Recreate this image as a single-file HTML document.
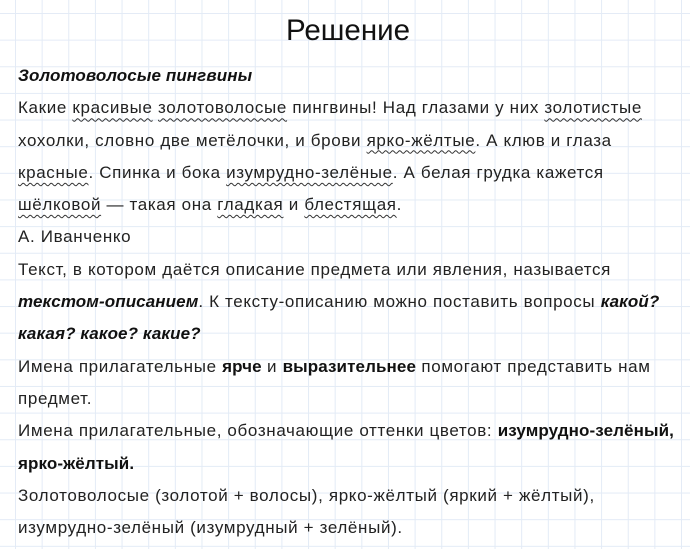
<!DOCTYPE html>
<html><head><meta charset="utf-8"><style>
html,body{margin:0;padding:0}
body{width:690px;height:549px;overflow:hidden;background-color:#fff;
background-image:linear-gradient(to right,#e3ebf6 1px,transparent 1px),linear-gradient(to bottom,#e3ebf6 1px,transparent 1px);
background-size:26.65px 26.65px;background-position:15px 13px;
font-family:"Liberation Sans",sans-serif;color:#222;position:relative}
h1{position:absolute;left:0;width:690px;top:11px;margin:0;text-align:center;font-weight:normal;font-size:29.5px;color:#111;line-height:40px;padding-left:6px;box-sizing:border-box}
.t{position:absolute;left:18px;top:60px;font-size:17px;line-height:32.3px;letter-spacing:0.65px}
.t div{white-space:nowrap}
u{text-decoration:underline wavy #333;text-decoration-thickness:1px;text-underline-offset:4px}
b{color:#111;letter-spacing:0.1px}
</style></head><body>
<h1>Решение</h1>
<div class="t">
<div><b><i>Золотоволосые пингвины</i></b></div>
<div>Какие <u>красивые</u> <u>золотоволосые</u> пингвины! Над глазами у них <u>золотистые</u></div>
<div>хохолки, словно две метёлочки, и брови <u>ярко-жёлтые</u>. А клюв и глаза</div>
<div><u>красные</u>. Спинка и бока <u>изумрудно-зелёные</u>. А белая грудка кажется</div>
<div><u>шёлковой</u> — такая она <u>гладкая</u> и <u>блестящая</u>.</div>
<div>А. Иванченко</div>
<div>Текст, в котором даётся описание предмета или явления, называется</div>
<div><b><i>текстом-описанием</i></b>. К тексту-описанию можно поставить вопросы <b><i>какой?</i></b></div>
<div><b><i>какая? какое? какие?</i></b></div>
<div>Имена прилагательные <b>ярче</b> и <b>выразительнее</b> помогают представить нам</div>
<div>предмет.</div>
<div>Имена прилагательные, обозначающие оттенки цветов: <b>изумрудно-зелёный,</b></div>
<div><b>ярко-жёлтый.</b></div>
<div>Золотоволосые (золотой + волосы), ярко-жёлтый (яркий + жёлтый),</div>
<div>изумрудно-зелёный (изумрудный + зелёный).</div>
</div>
</body></html>
